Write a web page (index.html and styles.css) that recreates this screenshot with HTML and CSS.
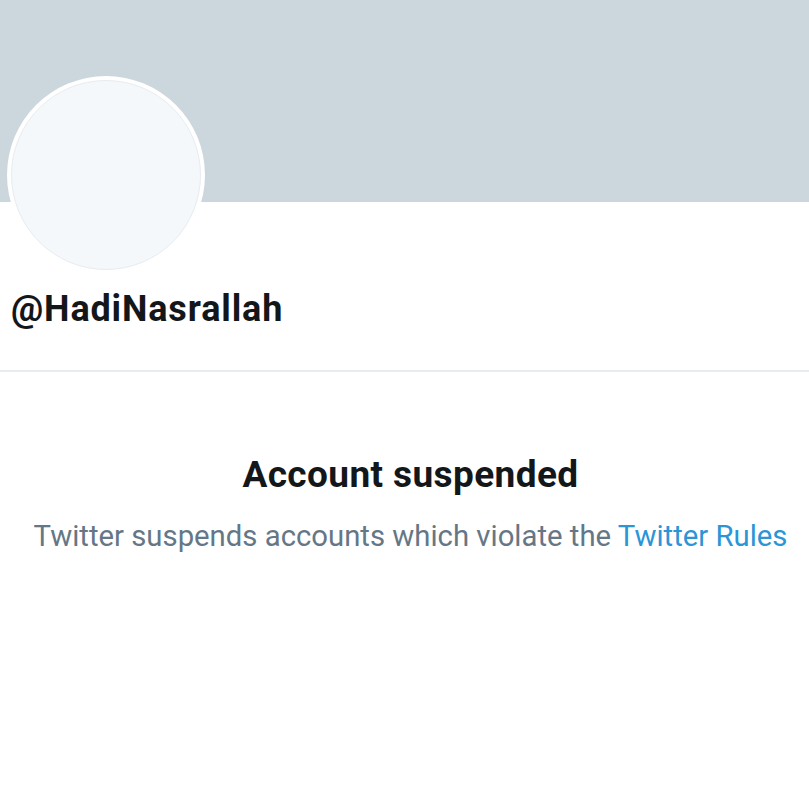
FILE: index.html
```html
<!DOCTYPE html>
<html>
<head>
<meta charset="utf-8">
<link rel="stylesheet" href="styles.css">
</head>
<body>
<div class="page">
  <div class="banner"></div>
  <div class="profile">
    <div class="avatar"><div class="avatar-inner"></div></div>
    <div class="handle">@HadiNasrallah</div>
  </div>
  <div class="divider"></div>
  <div class="notice">
    <h1 class="title">Account suspended</h1>
    <p class="text">Twitter suspends accounts which violate the <a class="link" href="#">Twitter Rules</a></p>
  </div>
</div>
</body>
</html>
```
FILE: styles.css
```css
html, body {
  margin: 0;
  padding: 0;
  background: #ffffff;
}
body {
  font-family: Roboto, "Liberation Sans", sans-serif;
  width: 809px;
  height: 793px;
  overflow: hidden;
}
.page {
  position: relative;
}
.banner {
  height: 202px;
  background: #ccd6dd;
}
.profile {
  padding-left: 11px;
  height: 168px;
  position: relative;
}
.avatar {
  position: absolute;
  left: 7px;
  top: -126px;
  width: 198px;
  height: 198px;
  border-radius: 50%;
  background: #ffffff;
  display: flex;
  align-items: center;
  justify-content: center;
}
.avatar-inner {
  width: 188px;
  height: 188px;
  border-radius: 50%;
  background: #f5f8fa;
  border: 1.5px solid #e6ecf0;
}
.handle {
  padding-top: 85px;
  font-size: 36px;
  font-weight: 700;
  letter-spacing: 0.85px;
  color: #14171a;
  line-height: 44px;
}
.divider {
  height: 2px;
  background: #e6ecf0;
}
.notice {
  text-align: center;
  padding-left: 12px;
}
.title {
  margin: 83px 0 0;
  font-size: 37px;
  font-weight: 700;
  letter-spacing: 0.4px;
  color: #14171a;
  line-height: 40px;
}
.text {
  margin: 25px 0 0;
  font-size: 29.3px;
  color: #657786;
  line-height: 32px;
}
.link {
  color: #2b95d6;
  text-decoration: none;
}
```
